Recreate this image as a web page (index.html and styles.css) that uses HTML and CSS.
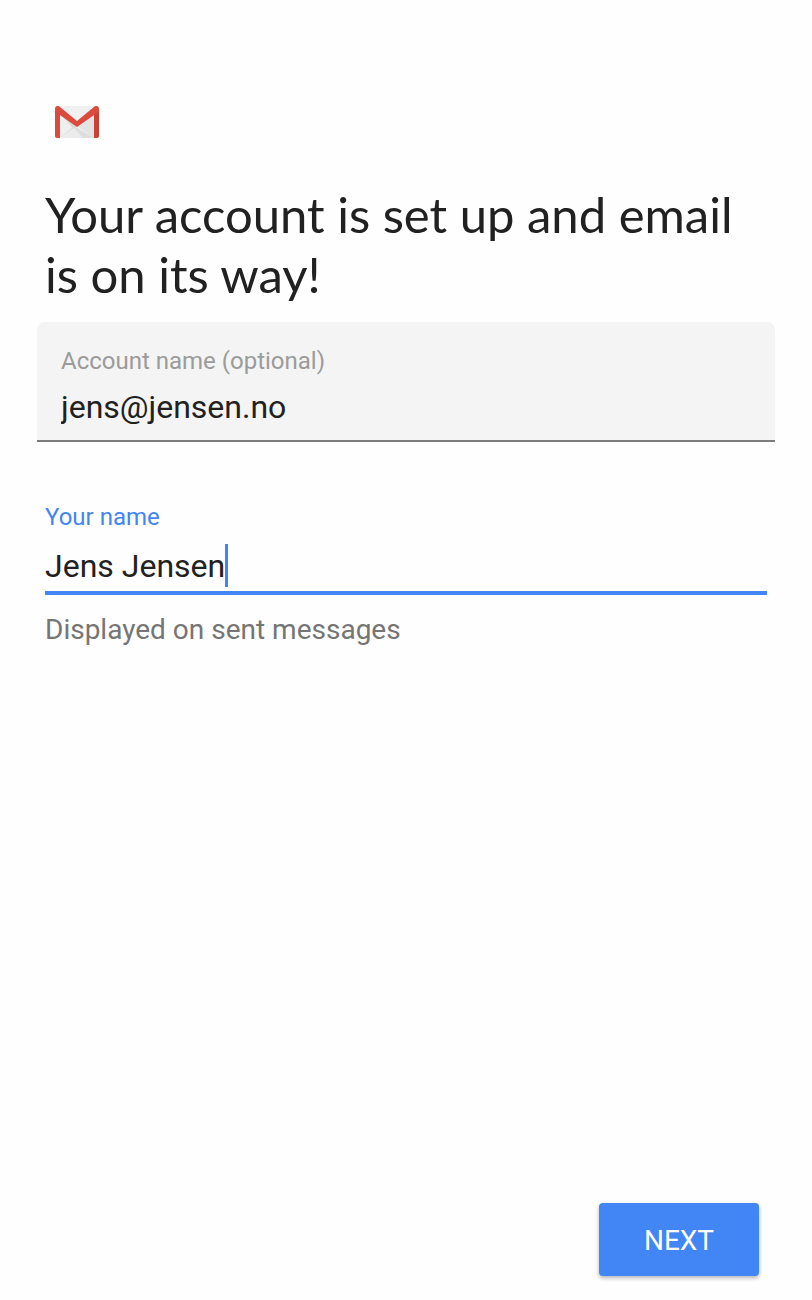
FILE: index.html
```html
<!DOCTYPE html>
<html lang="en">
<head>
    <meta charset="UTF-8">
    <meta name="viewport" content="width=device-width, initial-scale=1.0">
    <title>Account setup</title>
    <link rel="stylesheet" href="styles.css">
</head>
<body>

<form class="setup">
    <svg class="logo" viewBox="0 0 44 32" role="img" aria-label="Gmail">
        <path fill="#efefef" d="M3 0h38v32H3z"/>
        <path fill="#e4e4e4" d="M5 8l17 12L39 9v23z"/>
        <path fill="#d8d8d8" d="M5 8l17 12-4 2z"/>
        <path fill="#dddddd" d="M5 32l14-12 3 2 17 10z"/>
        <path fill="#ececec" d="M5 32l14-10 9 10z"/>
        <path fill="#f0f0f0" d="M5 0h34L22 15z"/>
        <path fill="#db4a3d" d="M0 3v27a2 2 0 0 0 2 2h3V7z"/>
        <path fill="#cc4134" d="M44 3v27a2 2 0 0 1-2 2h-3V7z"/>
        <path fill="#db4a3d" d="M0 3C0 0 3-1 5 1l17 14L39 1c2-2 5-1 5 2 0 1-1 3-2 4L22 21 2 7C1 6 0 4 0 3z"/>
    </svg>
    <h1>Your account is set up and email is on its way!</h1>

    <div class="field filled">
        <label for="accountName">Account name (optional)</label>
        <input type="text" id="accountName" name="accountName" value="jens@jensen.no">
    </div>

    <div class="field active">
        <label for="yourName">Your name</label>
        <div class="input-row">
            <input type="text" id="yourName" name="yourName" value="Jens Jensen" aria-describedby="nameHint">
            <span class="caret"></span>
        </div>
    </div>
    <p class="hint" id="nameHint">Displayed on sent messages</p>

    <div class="actions">
        <button type="submit" class="next-btn">NEXT</button>
    </div>
</form>

</body>
</html>
```
FILE: styles.css
```css
* {
    box-sizing: border-box;
}
body {
    margin: 0;
    background-color: #fefefe;
    color: #212121;
    font-family: Roboto, sans-serif;
}
.setup {
    display: flex;
    flex-direction: column;
    min-height: 100vh;
    padding: 106px 37px 24px;
}
.logo {
    width: 44px;
    height: 32px;
    margin-left: 18px;
}
h1 {
    margin: 46px 8px 18px;
    font-family: Lato, sans-serif;
    font-size: 49px;
    font-weight: 400;
    line-height: 60px;
}
.field {
    display: flex;
    flex-direction: column;
}
.field label {
    font-size: 24px;
    line-height: 32px;
}
.field input {
    padding: 0;
    border: none;
    outline: none;
    background: none;
    color: #212121;
    font-family: inherit;
    font-size: 32px;
    line-height: 44px;
    height: 44px;
}
.filled {
    padding: 23px 24px 11px;
    background-color: #f4f4f4;
    border-bottom: 2px solid #7c7c7c;
    border-radius: 8px 8px 0 0;
}
.filled label {
    color: #9b9b9b;
    margin-bottom: 8px;
}
.active {
    margin: 59px 8px 0;
    border-bottom: 4px solid #4285f4;
}
.active label {
    color: #4285f4;
    margin-bottom: 11px;
}
.input-row {
    display: flex;
    margin-bottom: 3px;
}
.input-row input {
    field-sizing: content;
    max-width: 100%;
}
.caret {
    width: 3px;
    height: 43px;
    background-color: #4285f4;
}
.hint {
    margin: 18px 8px 40px;
    color: #757575;
    font-size: 28px;
    line-height: 34px;
}
.actions {
    display: flex;
    justify-content: flex-end;
    margin-top: auto;
    padding-right: 16px;
}
.next-btn {
    min-width: 160px;
    height: 73px;
    padding: 2px 24px 0;
    border: none;
    border-radius: 4px;
    background-color: #4285f4;
    color: white;
    font-family: inherit;
    font-size: 28px;
    box-shadow: 0 2px 4px rgba(0, 0, 0, 0.3);
    cursor: pointer;
}
```
